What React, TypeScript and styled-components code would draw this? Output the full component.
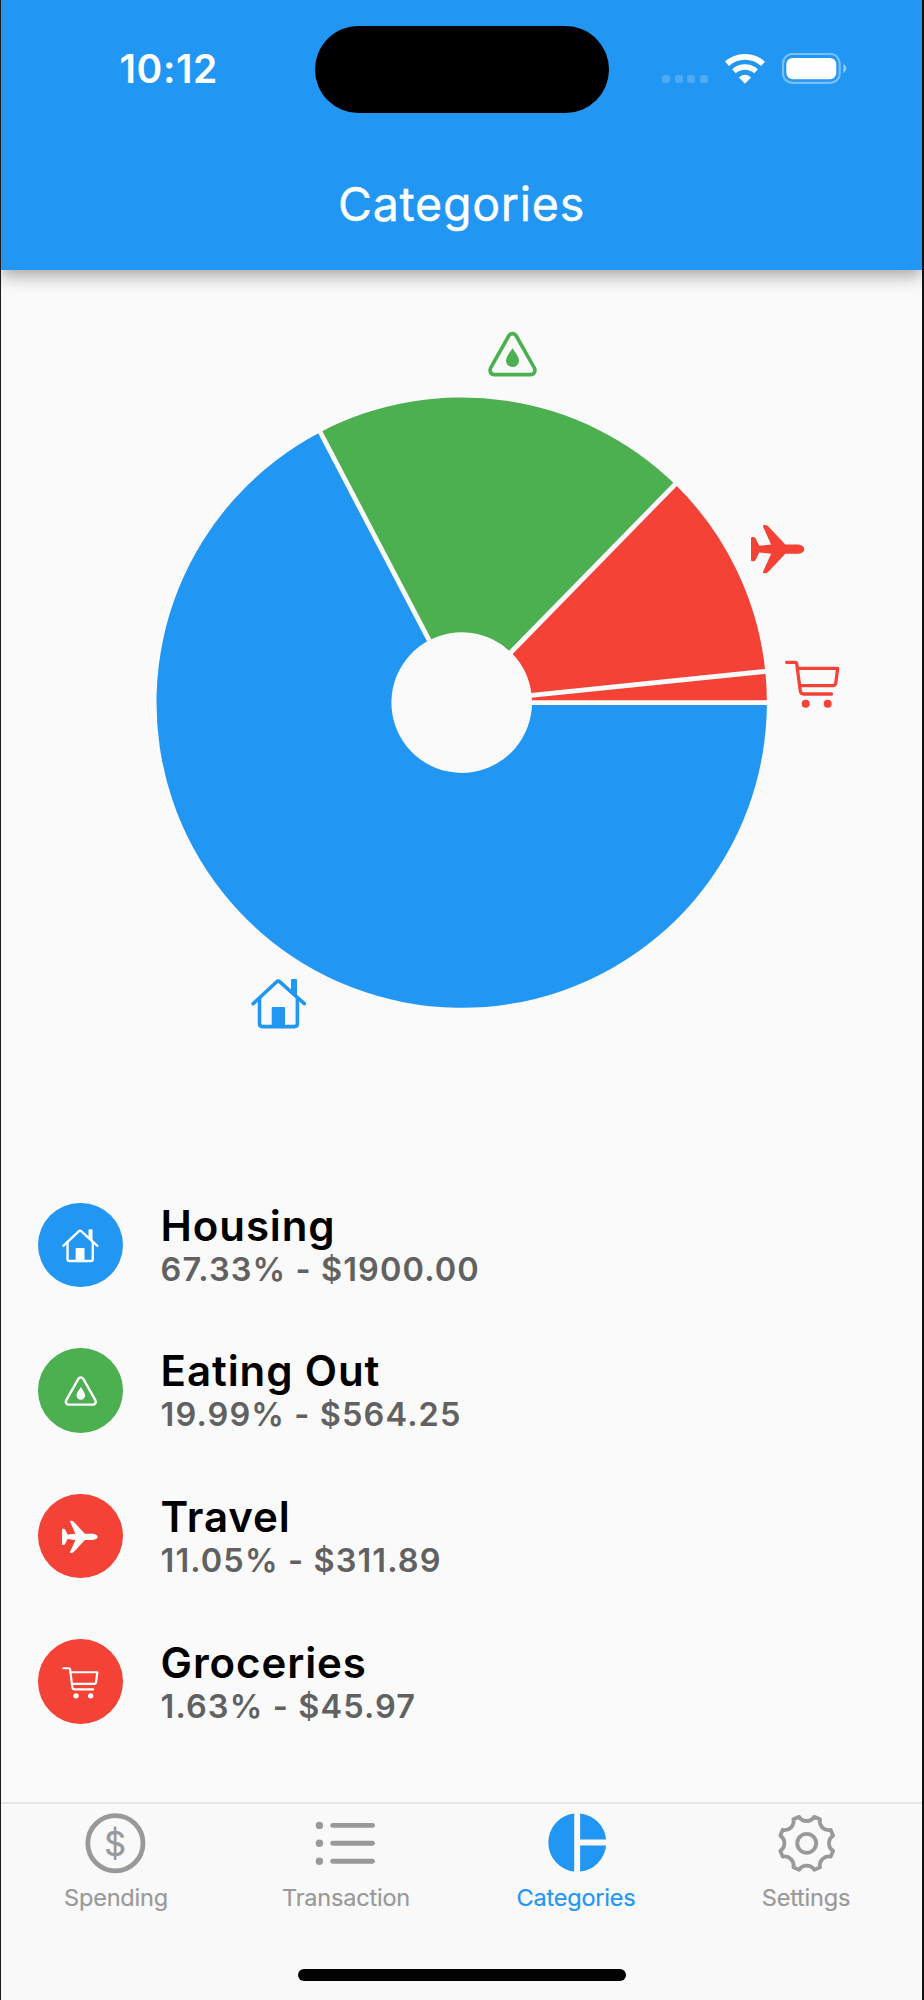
import React from 'react';
import styled, { createGlobalStyle } from 'styled-components';

const BLUE = '#2196f3';
const GREEN = '#4caf50';
const RED = '#f44336';
const GREY = '#999999';

const GlobalStyle = createGlobalStyle`
  * { box-sizing: border-box; }
  body {
    margin: 0;
    background: #fafafa;
    font-family: Inter, 'Liberation Sans', sans-serif;
  }
`;

const Screen = styled.div`
  width: 924px;
  height: 2000px;
  display: flex;
  flex-direction: column;
  overflow: hidden;
  background: #fafafa;
  border-left: 1px solid #1c1c1c;
  border-right: 2px solid #111;
`;

const Header = styled.header`
  height: 270px;
  flex: none;
  background: ${BLUE};
  color: #fff;
  box-shadow: 0 6px 12px -2px rgba(0, 0, 0, 0.17), 0 10px 16px 0 rgba(0, 0, 0, 0.13),
    0 2px 22px 0 rgba(0, 0, 0, 0.08);
`;

const StatusBar = styled.div`
  display: grid;
  grid-template-columns: 1fr 294px 1fr;
  align-items: center;
  padding-top: 26px;
`;

const Time = styled.span`
  padding: 0 0 2px 118.5px;
  font-size: 39px;
  line-height: 44px;
  font-weight: 600;
  letter-spacing: 0.6px;
`;

const Island = styled.div`
  height: 87px;
  border-radius: 44px;
  background: #000;
`;

const StatusIcons = styled.div`
  display: flex;
  align-items: flex-end;
  padding: 0 0 2px 53.5px;
  height: 33px;

  & > svg + svg {
    margin-left: 17px;
  }
`;

const Dots = styled.div`
  display: flex;
  gap: 4.6px;
  margin: 0 17px 1px 0;
`;

const Dot = styled.i`
  width: 8px;
  height: 8px;
  border-radius: 2.5px;
  background: rgba(255, 255, 255, 0.2);
`;

const Title = styled.h1`
  margin: 61px 0 0;
  text-align: center;
  font-size: 46.5px;
  line-height: 60px;
  font-weight: 400;
  letter-spacing: 0.75px;
  -webkit-text-stroke: 0.4px currentColor;
`;

const Main = styled.main`
  flex: 1;
  display: flex;
  flex-direction: column;
`;

const ChartSvg = styled.svg`
  display: block;
  width: 921px;
  height: 902px;
  flex: none;
`;

const List = styled.ul`
  list-style: none;
  margin: 0;
  padding: 0;
`;

const Row = styled.li`
  display: flex;
  align-items: center;
  height: 145.6px;
  padding-left: 37.3px;
`;

const Badge = styled.div<{ $color: string }>`
  width: 84.6px;
  height: 84.6px;
  border-radius: 50%;
  background: ${(p) => p.$color};
  color: #fff;
  display: flex;
  align-items: center;
  justify-content: center;
`;

const RowText = styled.div`
  margin-left: 37.7px;
`;

const Name = styled.div`
  font-size: 42px;
  line-height: 48px;
  font-weight: 600;
  letter-spacing: 0.9px;
  color: #000;
`;

const Amount = styled.div`
  margin-bottom: -1px;
  font-size: 32.5px;
  line-height: 39px;
  font-weight: 600;
  letter-spacing: 1.1px;
  color: #616161;
`;

const TabBar = styled.nav`
  flex: none;
  height: 198px;
  border-top: 2px solid #e6e6e6;
  background: #f9f9f9;
  display: flex;
  flex-direction: column;
  align-items: center;
`;

const Tabs = styled.div`
  display: grid;
  grid-template-columns: repeat(4, 1fr);
  width: 100%;
  height: 165px;
  padding-right: 1px;
`;

const Tab = styled.div<{ $active?: boolean }>`
  display: flex;
  flex-direction: column;
  align-items: center;
  padding-top: 8px;
  color: ${(p) => (p.$active ? BLUE : GREY)};
`;

const TabLabel = styled.span`
  margin-top: 7px;
  font-size: 23.5px;
  line-height: 30px;
  font-weight: 400;
  letter-spacing: -0.2px;
  -webkit-text-stroke: 0.2px currentColor;
`;

const HomeIndicator = styled.div`
  width: 328px;
  height: 12px;
  border-radius: 6px;
  background: #000;
`;

type IconProps = { size: number; x?: number; y?: number; color?: string };

const Glyph = ({ size, x, y, color = 'currentColor', children }: IconProps & { children: React.ReactNode }) => (
  <svg
    x={x}
    y={y}
    width={size}
    height={size}
    viewBox="0 0 60 60"
    fill="none"
    stroke={color}
    color={color}
    strokeWidth="3.6"
    strokeLinecap="round"
    strokeLinejoin="round"
  >
    {children}
  </svg>
);

const HouseIcon = (p: IconProps) => (
  <Glyph {...p}>
    <path d="M3.4 31.2 27 9.3q1.6-1.4 3.2 0L54.6 31.2" />
    <path d="M9.8 25.8V51q0 3.1 3.3 3.1H44.4q3.3 0 3.3-3.1V25.8" />
    <path d="M22 54V35.5q0-1 1-1H34.3q1 0 1 1V54Z" fill="currentColor" stroke="none" />
    <path d="M41.3 20V7.8q0-1.3 1.3-1.3h3.4q1.3 0 1.3 1.3V25.5Z" fill="currentColor" stroke="none" />
  </Glyph>
);

const DropTriangleIcon = (p: IconProps) => (
  <Glyph {...p}>
    <path d="M26.25 12.9C27.8 10.4 31.7 10.4 33.25 12.9L51.3 44.75C53.4 48.3 51.4 52 47.6 52H11.9C8.1 52 6.1 48.3 8.2 44.75Z" />
    <path
      d="M29.75 25.4C31.2 28.6 36.25 33.6 36.25 38.2A6.5 6.3 0 0 1 23.25 38.2C23.25 33.6 28.3 28.6 29.75 25.4Z"
      fill="currentColor"
      stroke="none"
    />
  </Glyph>
);

const PlaneIcon = (p: IconProps) => (
  <Glyph {...p}>
    <path
      d="M54.9 31.25C54.9 28.6 51.5 26.6 47.5 26.6H35.9L19 8.6Q17.6 7.1 15.9 7.1H14.7Q13.3 7.3 13.7 8.9L21.7 26.6L9.9 27.9L6.2 20.5Q5.4 19.1 4 19.1H2.7Q1.6 19.1 1.6 20.2V42.3Q1.6 43.4 2.7 43.4H4Q5.4 43.4 6.2 42L9.9 34.6L21.7 35.9L13.7 53.6Q13.3 55.2 14.7 55.4H15.9Q17.6 55.4 19 53.9L35.9 35.9H47.5C51.5 35.9 54.9 33.9 54.9 31.25Z"
      fill="currentColor"
      stroke="none"
    />
  </Glyph>
);

const CartIcon = (p: IconProps) => (
  <Glyph {...p}>
    <g strokeWidth="3.3">
      <path d="M3.4 9.4H12Q13.3 9.4 13.5 10.7L17.1 38Q17.5 41.1 20.5 41.1H48.3" />
      <path d="M14.2 15.4H54.5L52.6 30Q52.2 32.7 49.7 32.7H16.6" />
    </g>
    <circle cx="22.5" cy="50.75" r="4" fill="currentColor" stroke="none" />
    <circle cx="44.5" cy="50.75" r="4" fill="currentColor" stroke="none" />
  </Glyph>
);

const categories = [
  { name: 'Housing', percent: 67.33, amount: '1900.00', color: BLUE, Icon: HouseIcon, at: [248.7, 702.5] },
  { name: 'Eating Out', percent: 19.99, amount: '564.25', color: GREEN, Icon: DropTriangleIcon, at: [481.75, 52.6] },
  { name: 'Travel', percent: 11.05, amount: '311.89', color: RED, Icon: PlaneIcon, at: [748.4, 247.9] },
  { name: 'Groceries', percent: 1.63, amount: '45.97', color: RED, Icon: CartIcon, at: [782.2, 382.9] },
];

const CX = 460.7;
const CY = 432.6;
const OUTER = 305.2;
const INNER = 70.3;

const polar = (r: number, fraction: number, cx = CX, cy = CY) => {
  const a = fraction * Math.PI * 2;
  return `${(cx + r * Math.cos(a)).toFixed(2)} ${(cy + r * Math.sin(a)).toFixed(2)}`;
};

const PieChart = () => {
  let start = 0;
  const slices = categories.map((c) => {
    const from = start;
    start += c.percent / 100;
    return { ...c, from, to: start };
  });
  return (
    <ChartSvg viewBox="0 0 921 902">
      {slices.map((s) => {
        const large = s.to - s.from > 0.5 ? 1 : 0;
        return (
          <path
            key={s.name}
            fill={s.color}
            d={`M${polar(INNER, s.from)}L${polar(OUTER, s.from)}A${OUTER} ${OUTER} 0 ${large} 1 ${polar(OUTER, s.to)}L${polar(INNER, s.to)}A${INNER} ${INNER} 0 ${large} 0 ${polar(INNER, s.from)}Z`}
          />
        );
      })}
      {slices.map((s) => (
        <path
          key={s.name}
          stroke="#fafafa"
          strokeWidth="4.8"
          d={`M${polar(INNER - 3, s.from)}L${polar(OUTER + 3, s.from)}`}
        />
      ))}
      {slices.map(({ Icon, ...s }) => (
        <Icon key={s.name} size={60} x={s.at[0]} y={s.at[1]} color={s.color} />
      ))}
    </ChartSvg>
  );
};

const WifiIcon = () => (
  <svg width="40" height="30" viewBox="-20 -29.8 40 30" fill="none" stroke="#fff">
    <path d="M-18 -20A26.9 26.9 0 0 1 18 -20" strokeWidth="5.9" />
    <path d="M-11.1 -12.6A16.8 16.8 0 0 1 11.1 -12.6" strokeWidth="5.5" />
    <path
      d="M-5.6 -6.9Q0 -11.4 5.6 -6.9Q6.2 -6.3 5.6 -5.7L.5 -.6Q0 -.2 -.5 -.6L-5.6 -5.7Q-6.2 -6.3 -5.6 -6.9Z"
      fill="#fff"
      stroke="none"
    />
  </svg>
);

const BatteryIcon = () => (
  <svg width="65" height="31" viewBox="0 0 65 31">
    <rect x="1" y="1" width="56.7" height="28.9" rx="9.5" fill="none" stroke="#fff" strokeOpacity=".4" strokeWidth="2.2" />
    <rect x="4.3" y="4.9" width="50" height="21.3" rx="6.3" fill="#fff" />
    <path d="M61.3 10.8q3 1.8 3 4.7t-3 4.7Z" fill="#fff" fillOpacity=".5" />
  </svg>
);

const DollarIcon = () => (
  <svg width="64" height="64" viewBox="0 0 64 64" fill="none" stroke="currentColor">
    <circle cx="31.4" cy="31.3" r="27.6" strokeWidth="4.8" />
    <path d="M31 14.5V48" strokeWidth="2.2" />
    <text x="31.1" y="43.7" textAnchor="middle" fontSize="34" fontWeight="400" fill="currentColor" strokeWidth=".3">
      $
    </text>
  </svg>
);

const ListIcon = () => (
  <svg width="64" height="64" viewBox="0 0 64 64" fill="currentColor" stroke="currentColor">
    {[13.4, 31.3, 49.2].map((y) => (
      <g key={y}>
        <circle cx="5.4" cy={y} r="3.7" stroke="none" />
        <path d={`M18.7 ${y}H58.5`} strokeWidth="4.9" strokeLinecap="round" />
      </g>
    ))}
  </svg>
);

const PieIcon = () => (
  <svg width="64" height="64" viewBox="0 0 64 64" fill="currentColor">
    <path d="M30.2 1.4A29.3 29.3 0 0 0 30.2 59.6Z" />
    <path d="M36.1 1.4A29.3 29.3 0 0 1 62.1 27.4H36.1Z" />
    <path d="M36.1 59.6A29.3 29.3 0 0 0 62.1 33.6H36.1Z" />
  </svg>
);

const gearPath = () => {
  const point = (deg: number) => polar(27.5, deg / 360, 32.7, 31.3);
  let d = `M${point(-16)}`;
  for (let i = 0; i < 8; i += 1) {
    d += `A9 9 0 0 0 ${point(i * 45 + 16)}L${point(i * 45 + 29)}`;
  }
  return `${d}Z`;
};

const GearIcon = () => (
  <svg width="64" height="64" viewBox="0 0 64 64" fill="none" stroke="currentColor" strokeWidth="3.8">
    <path d={gearPath()} strokeLinejoin="round" />
    <circle cx="32.7" cy="31.3" r="9.5" />
  </svg>
);

const tabs = [
  { label: 'Spending', Icon: DollarIcon },
  { label: 'Transaction', Icon: ListIcon },
  { label: 'Categories', Icon: PieIcon, active: true },
  { label: 'Settings', Icon: GearIcon },
];

export default function App() {
  return (
    <Screen>
      <GlobalStyle />
      <Header>
        <StatusBar>
          <Time>10:12</Time>
          <Island />
          <StatusIcons>
            <Dots>
              <Dot />
              <Dot />
              <Dot />
              <Dot />
            </Dots>
            <WifiIcon />
            <BatteryIcon />
          </StatusIcons>
        </StatusBar>
        <Title>Categories</Title>
      </Header>
      <Main>
        <PieChart />
        <List>
          {categories.map(({ name, percent, amount, color, Icon }) => (
            <Row key={name}>
              <Badge $color={color}>
                <Icon size={40} />
              </Badge>
              <RowText>
                <Name>{name}</Name>
                <Amount>
                  {percent.toFixed(2)}% - ${amount}
                </Amount>
              </RowText>
            </Row>
          ))}
        </List>
      </Main>
      <TabBar>
        <Tabs>
          {tabs.map(({ label, Icon, active }) => (
            <Tab key={label} $active={active}>
              <Icon />
              <TabLabel>{label}</TabLabel>
            </Tab>
          ))}
        </Tabs>
        <HomeIndicator />
      </TabBar>
    </Screen>
  );
}
